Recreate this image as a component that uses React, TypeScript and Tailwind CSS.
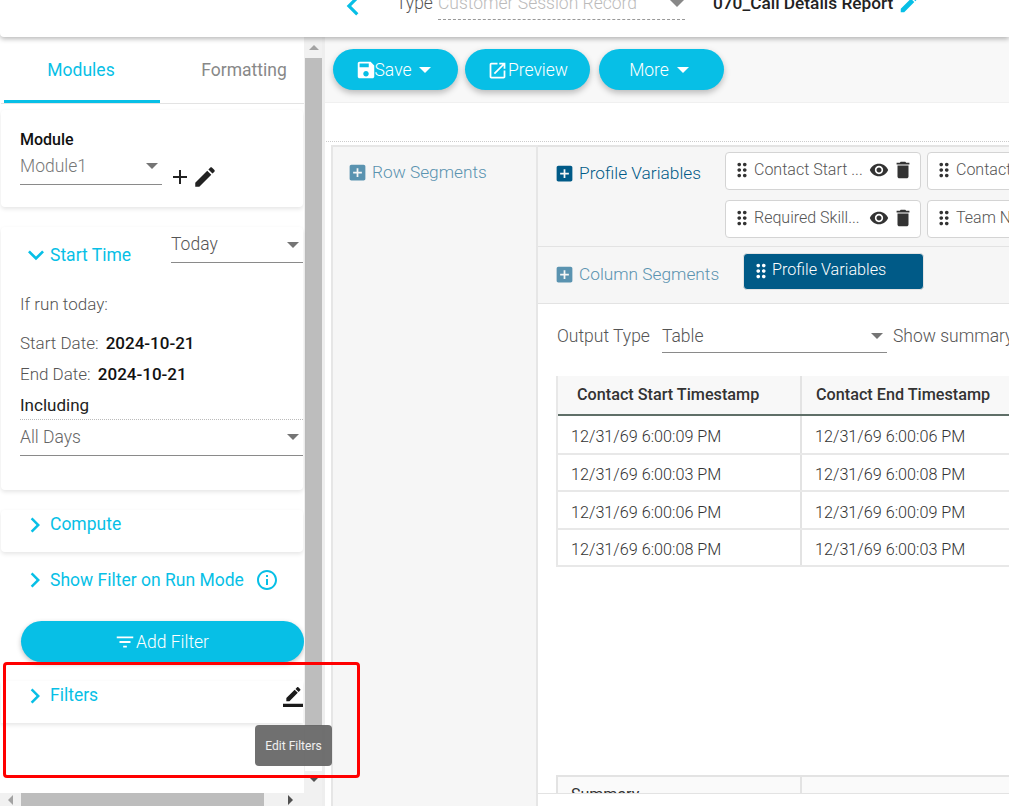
const EDIT = 'M3 17.25V21h3.75L17.81 9.94l-3.75-3.75L3 17.25zM20.71 7.04c.39-.39.39-1.02 0-1.41l-2.34-2.34c-.39-.39-1.02-.39-1.41 0l-1.83 1.83 3.75 3.75 1.83-1.83z';
const SAVE = 'M17 3H5c-1.11 0-2 .9-2 2v14c0 1.1.89 2 2 2h14c1.1 0 2-.9 2-2V7l-4-4zm-5 16c-1.66 0-3-1.34-3-3s1.34-3 3-3 3 1.34 3 3-1.34 3-3 3zm3-10H5V5h10v4z';
const OPEN = 'M19 19H5V5h7V3H5c-1.11 0-2 .9-2 2v14c0 1.1.89 2 2 2h14c1.1 0 2-.9 2-2v-7h-2v7zM14 3v2h3.59l-9.83 9.83 1.41 1.41L19 6.41V10h2V3h-7z';
const EYE = 'M12 4.5C7 4.5 2.73 7.61 1 12c1.73 4.39 6 7.5 11 7.5s9.27-3.11 11-7.5c-1.73-4.39-6-7.5-11-7.5zM12 17c-2.76 0-5-2.24-5-5s2.24-5 5-5 5 2.24 5 5-2.24 5-5 5zm0-8c-1.66 0-3 1.34-3 3s1.34 3 3 3 3-1.34 3-3-1.34-3-3-3z';
const TRASH = 'M6 19c0 1.1.9 2 2 2h8c1.1 0 2-.9 2-2V7H6v12zM19 4h-3.5l-1-1h-5l-1 1H5v2h14V4z';
const DRAG = 'M11 18c0 1.1-.9 2-2 2s-2-.9-2-2 .9-2 2-2 2 .9 2 2zm-2-8c-1.1 0-2 .9-2 2s.9 2 2 2 2-.9 2-2-.9-2-2-2zm0-6c-1.1 0-2 .9-2 2s.9 2 2 2 2-.9 2-2-.9-2-2-2zm6 4c1.1 0 2-.9 2-2s-.9-2-2-2-2 .9-2 2 .9 2 2 2zm0 2c-1.1 0-2 .9-2 2s.9 2 2 2 2-.9 2-2-.9-2-2-2zm0 6c-1.1 0-2 .9-2 2s.9 2 2 2 2-.9 2-2-.9-2-2-2z';
const ADD_BOX = 'M19 3H5c-1.11 0-2 .9-2 2v14c0 1.1.89 2 2 2h14c1.1 0 2-.9 2-2V5c0-1.1-.9-2-2-2zm-2 10h-4v4h-2v-4H7v-2h4V7h2v4h4v2z';
const FILTER = 'M10 18h4v-2h-4v2zM3 6v2h18V6H3zm3 7h12v-2H6v2z';
const BORDER_EDIT = 'M17.75 7L14 3.25l-10 10V17h3.75l10-10zm2.96-2.96c.39-.39.39-1.02 0-1.41L18.37.29c-.39-.39-1.02-.39-1.41 0L15 2.25 18.75 6l1.96-1.96zM0 20h24v4H0z';
const INFO = 'M11 7h2v2h-2zm0 4h2v6h-2zm1-9C6.48 2 2 6.48 2 12s4.48 10 10 10 10-4.48 10-10S17.52 2 12 2zm0 18c-4.41 0-8-3.59-8-8s3.59-8 8-8 8 3.59 8 8-3.59 8-8 8z';
const RIGHT = 'M10 6L8.59 7.41 13.17 12l-4.58 4.59L10 18l6-6z';
const DOWN = 'M16.59 8.59L12 13.17 7.41 8.59 6 10l6 6 6-6z';
const LEFT = 'M15.41 7.41L14 6l-6 6 6 6 1.41-1.41L10.83 12z';
const PLUS = 'M19 13h-6v6h-2v-6H5v-2h6V5h2v6h6v2z';

function Icon({ d, className }: { d: string; className?: string }) {
  return (
    <svg viewBox="0 0 24 24" fill="currentColor" className={className}>
      <path d={d} />
    </svg>
  );
}

function Caret({ className }: { className?: string }) {
  return <span className={`w-0 h-0 border-x-[6px] border-x-transparent border-t-[6px] ${className ?? 'border-t-[#757575]'}`} />;
}

function Select({ value, className }: { value: string; className: string }) {
  return (
    <div className={`flex items-center justify-between border-b border-[#8a8a8a] pr-[4px] font-light text-[#555] shrink-0 ${className}`}>
      <span>{value}</span>
      <Caret />
    </div>
  );
}

function Chip({ label, cut }: { label: string; cut?: boolean }) {
  return (
    <div className="w-[196px] h-[38px] shrink-0 flex items-center bg-white border border-[#d4d4d4] rounded pl-[5px] pb-[2px] text-[#555] text-[16px] font-light">
      <Icon d={DRAG} className="w-[22px] h-[22px] text-[#333] shrink-0" />
      <span className="ml-[1px] w-[108px] whitespace-nowrap overflow-hidden">{label}</span>
      {!cut && (
        <>
          <Icon d={EYE} className="w-[20px] h-[20px] text-[#333] ml-[7px] shrink-0" />
          <Icon d={TRASH} className="w-[22px] h-[22px] text-[#333] ml-[3px] shrink-0" />
        </>
      )}
    </div>
  );
}

function SegmentTitle({ label, dark }: { label: string; dark?: boolean }) {
  return (
    <div className={`flex items-center text-[17.3px] font-light ${dark ? 'text-[#005a87]' : 'text-[#5a93b0]'}`}>
      <Icon d={ADD_BOX} className="w-[21px] h-[21px] -ml-[3px] mr-[4px]" />
      <span className="whitespace-nowrap">{label}</span>
    </div>
  );
}

function ToolButton({ children, className }: { children: React.ReactNode; className?: string }) {
  return (
    <button className={`w-[125px] h-[41px] rounded-full bg-[#07bfe6] text-white text-[17.5px] font-light flex items-center justify-center pt-[1px] shadow-[0_3px_6px_rgba(0,0,0,0.25)] ${className ?? ''}`}>
      {children}
    </button>
  );
}

const ROWS = [
  ['12/31/69 6:00:09 PM', '12/31/69 6:00:06 PM', 'h-[39px]'],
  ['12/31/69 6:00:03 PM', '12/31/69 6:00:08 PM', 'h-[37px]'],
  ['12/31/69 6:00:06 PM', '12/31/69 6:00:09 PM', 'h-[38px]'],
  ['12/31/69 6:00:08 PM', '12/31/69 6:00:03 PM', 'h-[37px]'],
];

export default function App() {
  return (
    <div className="relative w-[1009px] h-[806px] overflow-hidden bg-white flex flex-col font-['Roboto',sans-serif]">
      {/* Header */}
      <header className="relative z-10 h-[37px] shrink-0 bg-white shadow-[0_2px_5px_rgba(0,0,0,0.28)] rounded-bl flex items-start text-[17.5px] overflow-hidden">
        <Icon d={LEFT} className="w-[38px] h-[38px] text-[#07bfe6] ml-[334px] -mt-[13px]" />
        <span className="ml-[24px] -mt-[9px] font-light text-[#555] leading-6">Type</span>
        <div className="ml-[5px] -mt-[9px] w-[247px] h-[29px] border-b border-dashed border-[#999] flex justify-between pr-[1px] font-light text-[#bbb] leading-6">
          <span>Customer Session Record</span>
          <Caret className="mt-[9px] border-t-[#888] border-x-[7px] border-t-[7px]" />
        </div>
        <span className="ml-[28px] -mt-[9px] font-medium text-[#222] text-[17.3px] leading-6">070_Call Details Report</span>
        <Icon d={EDIT} className="w-[22px] h-[22px] text-[#07bfe6] ml-[5px] -mt-[7px]" />
      </header>

      <div className="flex-1 flex min-h-0">
        {/* Sidebar */}
        <aside className="w-[325px] shrink-0 flex flex-col border-r-[3px] border-[#eeeeee]">
          <div className="flex-1 flex min-h-0">
            <div className="w-[304px] shrink-0 pl-[1px] flex flex-col">
              <div className="h-[67px] flex border-b border-[#e3e3e3] pl-[3px] text-[17.5px] font-normal">
                <div className="w-[156px] h-[66px] flex items-center justify-center pt-[3px] pr-[2px] border-b-[3px] border-[#07bfe6] text-[#07bfe6]">Modules</div>
                <div className="flex-1 flex items-center justify-center pl-[24px] text-[#888]">Formatting</div>
              </div>

              <section className="mt-[6px] h-[97px] w-[302px] bg-white rounded shadow-[0_2px_4px_rgba(0,0,0,0.1)] pl-[19px] pt-[20px]">
                <div className="text-[16px] font-medium text-[#111] leading-5">Module</div>
                <div className="flex items-start">
                  <Select value="Module1" className="w-[142px] h-[35px] pb-[2px] text-[17.5px] leading-[22px] text-[#777]" />
                  <Icon d={PLUS} className="w-[24px] h-[24px] text-[#222] ml-[6px] mt-[15px]" />
                  <Icon d={EDIT} className="w-[26px] h-[26px] text-[#222] mt-[14px]" />
                </div>
              </section>

              <section className="mt-[20px] h-[263px] w-[302px] bg-white rounded shadow-[0_2px_4px_rgba(0,0,0,0.1)] relative">
                <div className="flex items-start h-[36px]">
                  <div className="w-[170px] pt-[16px] pl-[19px] flex items-center text-[17.5px] text-[#07bfe6] leading-6">
                    <Icon d={DOWN} className="w-[32px] h-[32px] -my-[4px] -mr-[2px]" />
                    <span>Start Time</span>
                  </div>
                  <Select value="Today" className="w-[132px] h-[36px] text-[17.5px] text-[#555]" />
                </div>
                <div className="pl-[19px] pt-[29px] text-[17px] font-light text-[#555] leading-6">
                  <div>If run today:</div>
                  <div className="mt-[15px]">Start Date: <span className="font-medium text-[#111] ml-[3px]">2024-10-21</span></div>
                  <div className="mt-[7px]">End Date: <span className="font-medium text-[#111] ml-[3px]">2024-10-21</span></div>
                  <div className="mt-[7px] pb-[2px] font-normal text-[#222] border-b border-dotted border-[#bbb]">Including</div>
                  <Select value="All Days" className="h-[36px] pb-[2px] text-[17.5px] text-[#666]" />
                </div>
              </section>

              <section className="mt-[20px] h-[42px] w-[302px] bg-white rounded shadow-[0_2px_4px_rgba(0,0,0,0.1)] flex items-start pl-[19px] text-[17.5px] text-[#07bfe6] leading-6 pt-[2px]">
                <Icon d={RIGHT} className="w-[30px] h-[30px] -my-[2px]" />
                <span>Compute</span>
              </section>

              <div className="mt-[16px] h-[24px] flex items-center pl-[19px] text-[17.5px] text-[#07bfe6]">
                <Icon d={RIGHT} className="w-[30px] h-[30px] -my-[3px]" />
                <span>Show Filter on Run Mode</span>
                <Icon d={INFO} className="w-[24px] h-[24px] ml-[11px]" />
              </div>

              <button className="mt-[29px] ml-[20px] w-[283px] h-[41px] shrink-0 rounded-full bg-[#07bfe6] text-white text-[17.5px] font-light flex items-center justify-center pt-[1px] pr-[2px] shadow-[0_2px_5px_rgba(0,0,0,0.25)]">
                <Icon d={FILTER} className="w-[22px] h-[22px]" />
                Add Filter
              </button>

              <section className="mt-[19px] h-[42px] w-[302px] bg-white shadow-[0_2px_4px_rgba(0,0,0,0.1)] flex items-start pl-[19px] text-[17.5px] text-[#07bfe6] leading-6 pt-[2px]">
                <Icon d={RIGHT} className="w-[30px] h-[30px] -my-[2px]" />
                <span className="flex-1">Filters</span>
                <Icon d={BORDER_EDIT} className="w-[20px] h-[20px] text-[#1a1a1a] mt-[4px]" />
              </section>
            </div>

            {/* Vertical scrollbar */}
            <div className="w-[18px] pl-[1px] bg-[#f1f1f1] flex flex-col items-center">
              <div className="h-[21px] shrink-0 flex items-center justify-center">
                <span className="w-0 h-0 border-x-[5px] border-x-transparent border-b-[5px] border-b-[#a3a3a3]" />
              </div>
              <div className="w-full h-[668px] shrink-0 bg-[#bdbdbd]" />
              <div className="flex-1 w-full bg-white" />
              <div className="h-[17px] mb-[5px] shrink-0 flex items-center justify-center">
                <span className="w-0 h-0 border-x-[5px] border-x-transparent border-t-[5px] border-t-[#505050]" />
              </div>
            </div>
          </div>

          {/* Horizontal scrollbar */}
          <div className="h-[13px] shrink-0 bg-[#f1f1f1] flex items-center">
            <div className="w-[21px] flex justify-center">
              <span className="w-0 h-0 border-y-[5px] border-y-transparent border-r-[5px] border-r-[#a3a3a3]" />
            </div>
            <div className="w-[243px] h-full bg-[#bdbdbd]" />
            <div className="w-[52px] flex justify-center">
              <span className="w-0 h-0 border-y-[5px] border-y-transparent border-l-[5px] border-l-[#505050]" />
            </div>
          </div>
        </aside>

        {/* Main */}
        <main className="flex-1 min-w-0 flex flex-col">
          <div className="h-[66px] shrink-0 bg-[#f8f8f8] flex items-start pt-[12px] pl-[8px] border-b border-[#f0f0f0]">
            <ToolButton className="pr-[5px]">
              <Icon d={SAVE} className="w-[22px] h-[22px] -mr-[2px]" />
              Save
              <Caret className="ml-[8px] border-t-white border-x-[5px] border-t-[5px]" />
            </ToolButton>
            <div className="ml-[7px]">
              <ToolButton>
                <Icon d={OPEN} className="w-[21px] h-[21px]" />
                Preview
              </ToolButton>
            </div>
            <div className="ml-[9px]">
              <ToolButton className="pr-[5px]">
                More
                <Caret className="ml-[8px] border-t-white border-x-[5px] border-t-[5px]" />
              </ToolButton>
            </div>
          </div>

          <div className="h-[39px] shrink-0 ml-[1px] border-b border-dotted border-[#cccccc]" />

          <div className="flex-1 min-h-0 flex mt-[3px] ml-[6px]">
            <div className="w-[207px] shrink-0 bg-[#f6f6f6] border-x-2 border-t-2 border-[#e6e6e6] pl-[17px] pt-[13px]">
              <SegmentTitle label="Row Segments" />
            </div>

            <div className="w-[471px] shrink-0 flex flex-col">
              <div className="h-[102px] shrink-0 bg-[#f6f6f6] border-b border-t-2 border-[#e3e3e3] flex pl-[19px]">
                <div className="w-[168px] shrink-0 pt-[14px]">
                  <SegmentTitle label="Profile Variables" dark />
                </div>
                <div className="flex flex-col gap-[10px] pt-[5px]">
                  <div className="flex gap-[6px]">
                    <Chip label="Contact Start ..." />
                    <Chip label="Contact End Timestamp" cut />
                  </div>
                  <div className="flex gap-[6px]">
                    <Chip label="Required Skill..." />
                    <Chip label="Team Name" cut />
                  </div>
                </div>
              </div>

              <div className="h-[57px] shrink-0 bg-[#f6f6f6] border-b border-[#e3e3e3] flex pl-[19px]">
                <div className="w-[187px] shrink-0 pt-[15px]">
                  <SegmentTitle label="Column Segments" />
                </div>
                <div className="mt-[6px] -ml-[1px] w-[181px] h-[37px] bg-[#005a87] rounded-sm flex items-center pl-[6px] pb-[2px] text-white text-[16.2px] font-light border border-[#e3e3e3]">
                  <Icon d={DRAG} className="w-[22px] h-[22px] shrink-0" />
                  <span>Profile Variables</span>
                </div>
              </div>

              <div className="flex-1 min-h-0 flex flex-col pl-[19px] overflow-hidden">
                <div className="flex items-start pt-[19px] text-[17.5px] font-light text-[#555] h-[72px] shrink-0 whitespace-nowrap">
                  <span className="leading-[26px]">Output Type</span>
                  <Select value="Table" className="ml-[12px] w-[225px] h-[30px] pb-[3px] text-[#555]" />
                  <span className="ml-[6px] leading-[26px]">Show summary</span>
                </div>

                <div className="w-[471px] shrink-0 border-x-2 border-[#e8e8e8] -ml-[1px] -mr-[20px]">
                  <div className="flex h-[40px] bg-[#f8f8f8] border-b-[2px] border-[#5f6f68] text-[16.2px] font-medium text-[#333]">
                    <div className="w-[244px] pl-[19px] flex items-center border-r-2 border-[#e3e3e3]">Contact Start Timestamp</div>
                    <div className="pl-[14px] flex items-center">Contact End Timestamp</div>
                  </div>
                  {ROWS.map((row) => (
                    <div key={row[0]} className={`flex border-b-2 border-[#e8e8e8] text-[16.2px] font-light text-[#333] ${row[2]}`}>
                      <div className="w-[244px] pl-[13px] pt-[6px] flex items-center border-r-2 border-[#e3e3e3]">{row[0]}</div>
                      <div className="pl-[13px] pt-[6px] flex items-center">{row[1]}</div>
                    </div>
                  ))}
                </div>

                <div className="flex-1" />

                <div className="w-[471px] h-[18px] shrink-0 flex border-x-2 border-t-2 border-[#e3e3e3] bg-[#fafafa] -ml-[1px] overflow-hidden text-[16px] text-[#333]">
                  <div className="w-[244px] pl-[13px] pt-[6px] border-r-2 border-[#e3e3e3] font-normal">Summary</div>
                </div>
                <div className="h-[13px] shrink-0 -ml-[19px] bg-white border-t border-[#e3e3e3]" />
              </div>
            </div>
          </div>
        </main>
      </div>

      {/* Annotation and tooltip on top of the page */}
      <div className="absolute left-[3px] top-[662px] w-[357px] h-[116px] border-[3px] border-[#ff0000] rounded-sm z-20 pointer-events-none" />
      <div className="absolute left-[255px] top-[725px] w-[77px] h-[41px] rounded bg-[#616161]/90 text-white/90 text-[12px] flex items-center justify-center z-30">
        Edit Filters
      </div>
    </div>
  );
}
